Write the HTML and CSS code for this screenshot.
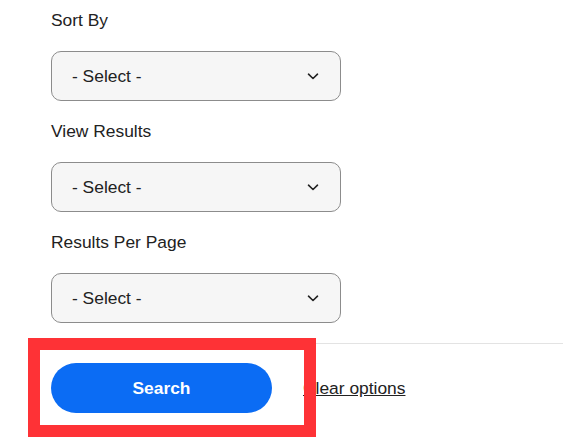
FILE: index.html
```html
<!DOCTYPE html>
<html lang="en">
<head>
<meta charset="utf-8">
<title>Search options</title>
<link rel="stylesheet" href="styles.css">
</head>
<body>
<div class="form">
  <div class="field">
    <div class="label">Sort By</div>
    <div class="select"><span>- Select -</span>
      <svg class="chev" width="12" height="7" viewBox="0 0 12 7"><path d="M1.5 1.2l4.5 4.3 4.5-4.3" fill="none" stroke="#222" stroke-width="1.6" stroke-linecap="round" stroke-linejoin="round"/></svg>
    </div>
  </div>
  <div class="field">
    <div class="label">View Results</div>
    <div class="select"><span>- Select -</span>
      <svg class="chev" width="12" height="7" viewBox="0 0 12 7"><path d="M1.5 1.2l4.5 4.3 4.5-4.3" fill="none" stroke="#222" stroke-width="1.6" stroke-linecap="round" stroke-linejoin="round"/></svg>
    </div>
  </div>
  <div class="field last">
    <div class="label">Results Per Page</div>
    <div class="select"><span>- Select -</span>
      <svg class="chev" width="12" height="7" viewBox="0 0 12 7"><path d="M1.5 1.2l4.5 4.3 4.5-4.3" fill="none" stroke="#222" stroke-width="1.6" stroke-linecap="round" stroke-linejoin="round"/></svg>
    </div>
  </div>
  <div class="rule"></div>
  <div class="actions">
    <button class="btn" type="button">Search</button>
    <a class="link" href="#">Clear options</a>
  </div>
</div>
<div class="highlight"></div>
</body>
</html>
```
FILE: styles.css
```css
html, body {
  margin: 0;
  padding: 0;
  background: #ffffff;
}
body {
  font-family: "Liberation Sans", Arial, sans-serif;
  color: #222222;
  font-size: 17.4px;
  position: relative;
  height: 447px;
  overflow: hidden;
}
.form {
  padding-top: 8px;
  padding-left: 51px;
}
.label {
  font-size: 17.4px;
  line-height: 24px;
  margin-bottom: 19px;
}
.select {
  box-sizing: border-box;
  width: 290px;
  height: 50px;
  border: 1px solid #8c8c8c;
  border-radius: 10px;
  background: #f6f6f6;
  display: flex;
  align-items: center;
  justify-content: space-between;
  padding: 0 21px 0 20px;
  font-size: 17.4px;
  margin-bottom: 18px;
}
.field.last .select {
  margin-bottom: 20px;
}
.chev {
  display: block;
}
.rule {
  height: 0;
  border-top: 1px solid #e3e3e3;
}
.actions {
  display: flex;
  align-items: center;
  padding-top: 19px;
}
.btn {
  width: 221px;
  height: 50px;
  border: none;
  border-radius: 25px;
  background: #0b6cf4;
  color: #ffffff;
  font-family: "Liberation Sans", Arial, sans-serif;
  font-weight: bold;
  font-size: 17.4px;
  padding: 0;
}
.link {
  margin-left: 31px;
  color: #222222;
  font-size: 17.4px;
  text-decoration: underline;
}
.highlight {
  position: absolute;
  left: 28px;
  top: 338px;
  width: 288px;
  height: 99px;
  box-sizing: border-box;
  border: 12px solid #fe3236;
}
```
